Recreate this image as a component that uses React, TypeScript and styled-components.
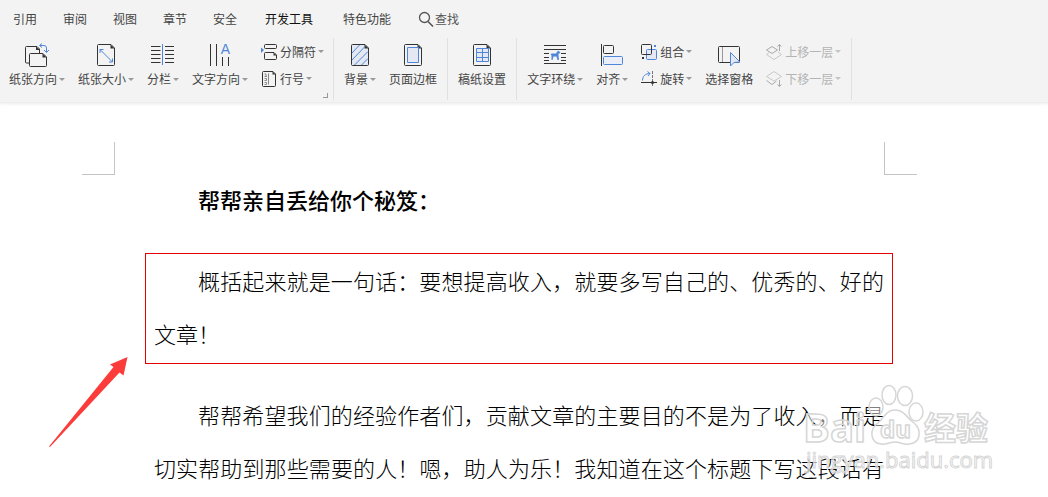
import React from "react";
import styled, { createGlobalStyle } from "styled-components";

const INK = "#333";
const BLUE = "#4f86d9";
const TINT = "#e3e8f3";

const GlobalStyle = createGlobalStyle`
  * { box-sizing: border-box; }
  body {
    margin: 0;
    background: #fff;
    font-family: "Noto Sans CJK SC", sans-serif;
    font-size: 12px;
    line-height: 16px;
    overflow: hidden;
  }
  button {
    font: inherit;
    color: inherit;
    border: 0;
    padding: 0;
    background: none;
    white-space: nowrap;
  }
  svg { display: block; flex: none; overflow: visible; }
`;

const Header = styled.header`
  background: #f3f3f3;
  color: #444;
  padding-bottom: 2px;
  border-bottom: 1px solid #ededed;
  box-shadow: 0 1px 3px rgba(0, 0, 0, 0.08);
`;

const TabBar = styled.nav`
  display: flex;
  align-items: center;
  height: 38px;
`;

const Tab = styled.button<{ $wide?: boolean; $strong?: boolean }>`
  padding: 0 ${(p) => (p.$wide ? 15 : 13)}px;
  color: ${(p) => (p.$strong ? "#111" : "#444")};
`;

const SearchButton = styled.button`
  display: flex;
  align-items: center;
  gap: 1px;
  padding: 0 12px;
  color: #555;
`;

const Ribbon = styled.div`
  display: flex;
  height: 62px;
`;

const Group = styled.div`
  position: relative;
  display: flex;
  gap: 13px;
  padding: 5px 10px 0;
  border-right: 1px solid #e0e0e0;
  &:first-child { padding: 5px 9px 0; }
`;

const BigButton = styled.button`
  display: flex;
  flex-direction: column;
  align-items: center;
  gap: 4px;
  height: 44px;
`;

const Label = styled.span`
  display: flex;
  align-items: center;
  gap: 2px;
`;

const Stack = styled.div`
  display: flex;
  flex-direction: column;
  align-items: flex-start;
  gap: 10px;
`;

const SmallButton = styled.button`
  display: flex;
  align-items: center;
  gap: 3px;
  height: 17px;
  &:disabled { color: #b4b4b4; }
`;

const CaretShape = styled.i`
  border: 3px solid transparent;
  border-top-color: #999;
  border-bottom: 0;
  button:disabled & { border-top-color: #c4c4c4; }
`;

const Launcher = styled.button`
  position: absolute;
  right: 5px;
  bottom: 2px;
  width: 5px;
  height: 5px;
  border: solid #999;
  border-width: 0 1px 1px 0;
`;

const Paper = styled.main`
  position: relative;
  padding: 39px 131px 0 82px;
`;

const Margins = styled.div`
  display: flex;
  justify-content: space-between;
`;

const Corner = styled.span<{ $side: "left" | "right" }>`
  width: 33px;
  height: 33px;
  border-bottom: 1px solid #c4c4c4;
  border-${(p) => (p.$side === "left" ? "right" : "left")}: 1px solid #c4c4c4;
`;

const Body = styled.article`
  margin: 0 33px 0 72px;
  color: #000;
  font-size: 22px;
  line-height: 53px;
`;

const Heading = styled.h1`
  margin: 0;
  font-size: 22px;
  line-height: 48px;
  font-weight: 500;
  text-indent: 2em;
`;

const Paragraph = styled.p<{ $runsOn?: boolean }>`
  margin: 0;
  font-weight: 300;
  text-indent: 2em;
  text-align: justify;
  text-align-last: ${(p) => (p.$runsOn ? "justify" : "auto")};
`;

const Callout = styled.section`
  position: relative;
  margin: 30px -9px 24px;
  padding: 0 8px 3px;
  border: 1px solid #e60000;
`;

const Arrow = styled.svg`
  position: absolute;
  left: -98px;
  top: 102px;
`;

const Watermark = styled.svg`
  position: absolute;
  right: 54px;
  top: 277px;
  pointer-events: none;
`;

const Caret = () => <CaretShape aria-hidden="true" />;

const Icon = ({ size, children }: { size: number; children: React.ReactNode }) => (
  <svg width={size} height={size} viewBox={`0 0 ${size} ${size}`} fill="none" stroke={INK} aria-hidden="true">
    {children}
  </svg>
);

const Sheet = ({ fill = "none" }: { fill?: string }) => (
  <>
    <path d="M4.500 1.500H17L20.500 5V21.500a1 1 0 0 1-1 1H4.500a1 1 0 0 1-1-1V2.500a1 1 0 0 1 1-1Z" fill={fill} />
    <path d="M16.500 1.500V5.500H20.500Z" fill={INK} stroke="none" />
  </>
);

const OrientationIcon = () => (
  <Icon size={24}>
    <path d="M4.500 20H1.500a1 1 0 0 1-1-1V4.500a1 1 0 0 1 1-1H12L14.500 6V10.500" />
    <path d="M11 3.500V7h4Z" fill={INK} stroke="none" />
    <path d="M5.500 10.500H18L21.500 14V22.500a1 1 0 0 1-1 1H5.500a1 1 0 0 1-1-1V11.500a1 1 0 0 1 1-1Z" fill="#f3f3f3" />
    <path d="M17.500 10.500V14.500H21.500Z" fill={INK} stroke="none" />
    <path d="M15 2.500h4a2.500 2.500 0 0 1 2.500 2.500V9M17 .5l-2.500 2L17 4.500M19 7l2.500 2.500L24 7" stroke={BLUE} />
  </Icon>
);

const SizeIcon = () => (
  <Icon size={24}>
    <Sheet />
    <path d="M6 6.500 18.500 19M6 10V6.500H9.500M15 19h3.500V15.500" stroke={BLUE} />
  </Icon>
);

const ColumnsIcon = () => (
  <Icon size={24}>
    <path d="M0 3.500H9.500M0 7.500H9.500M0 11.500H9.500M0 15.500H9.500M0 19.500H9.500M14 3.500H23M14 7.500H23M14 11.500H23M14 15.500H23M14 19.500H23" />
    <path d="M11.500 1V22" stroke={BLUE} />
  </Icon>
);

const DirectionIcon = () => (
  <Icon size={24}>
    <path d="M2.500 1V23M8.500 1V23M14.500 14V23M20.500 14V23" />
    <text x="17.500" y="11" textAnchor="middle" fontFamily="Liberation Sans, sans-serif" fontSize="14" fill={BLUE} stroke="none">A</text>
  </Icon>
);

const BreakIcon = () => (
  <Icon size={16}>
    <path d="M4.500 .5H14.500a1 1 0 0 1 1 1V3.500a1 1 0 0 1-1 1H4.500a1 1 0 0 1-1-1V1.500a1 1 0 0 1 1-1ZM4.500 8.500H13L15.500 11V14.500a1 1 0 0 1-1 1H4.500a1 1 0 0 1-1-1V9.500a1 1 0 0 1 1-1Z" />
    <path d="M12.500 8.500V11.500H15.500Z" fill={INK} stroke="none" />
    <path d="M0 3.500 3 6 0 9Z" fill={BLUE} stroke="none" />
  </Icon>
);

const LineNumberIcon = () => (
  <Icon size={16}>
    <path d="M2.500 .5H12L14.500 3V14.500a1 1 0 0 1-1 1H2.500a1 1 0 0 1-1-1V1.500a1 1 0 0 1 1-1Z" />
    <path d="M11.500 .5V3.500H14.500Z" fill={INK} stroke="none" />
    <path d="M7.500 2.500V13.500M3.500 3H5V5.500M3.500 5.500H6M3.500 7.500H5.500V9.500H3.500M3.500 11.500H5.500V13.500H3.500" stroke="#8a8a8a" />
  </Icon>
);

const BackgroundIcon = () => (
  <Icon size={24}>
    <Sheet fill={TINT} />
    <path d="M4 10 11.500 2M4 17 17 3.500M6.500 22 20 8.500M13.500 22 20 15.500" stroke={BLUE} />
  </Icon>
);

const BorderIcon = () => (
  <Icon size={24}>
    <Sheet />
    <path d="M6.500 4.500H17.500V19.500H6.500Z" fill={TINT} stroke={BLUE} />
  </Icon>
);

const GridPaperIcon = () => (
  <Icon size={24}>
    <Sheet />
    <path d="M6.500 5.500H18.500V18.500H6.500ZM6.500 9.500H18.500M6.500 14.500H18.500M12.500 5.500V9.500M12.500 14.500V18.500M12.500 9.500V14.500" fill={TINT} stroke={BLUE} />
  </Icon>
);

const WrapIcon = () => (
  <Icon size={24}>
    <path d="M1 2.500H23M1 6.500H23M1 10.500H6M1 14.500H6M18 10.500H23M18 14.500H23M1 17.500H6M18 17.500H23M1 20.500H23" />
    <path d="M7.500 11 9 10.500H13L15 7.500 16 8.500 17.500 9 16.500 10.500H15.500V13L16 17H14.500L13.500 13.500H10.500L9.500 17H8.500L8.500 12.500Z" fill={BLUE} stroke="none" />
  </Icon>
);

const AlignIcon = () => (
  <Icon size={24}>
    <path d="M1.500 1V23" />
    <rect x="3.500" y="2.500" width="10" height="8" rx="1" />
    <rect x="3.500" y="13.500" width="19" height="8" rx="1" stroke={BLUE} fill="#e9eef8" />
  </Icon>
);

const CombineIcon = () => (
  <Icon size={16}>
    <rect x="5.500" y="5.500" width="10" height="10" rx="1" stroke={BLUE} fill={TINT} />
    <rect x=".5" y=".5" width="10" height="10" rx="1" />
    <path d="M13 1H15V3H13Z" fill={BLUE} stroke="none" />
    <path d="M1 13H3V15H1Z" fill={INK} stroke="none" />
  </Icon>
);

const RotateIcon = () => (
  <Icon size={16}>
    <path d="M0 11.500H16" />
    <path d="M11.500 0V16" strokeDasharray="3 1" stroke="#777" />
    <circle cx="11.500" cy="11.500" r="1.500" fill={INK} stroke="none" />
    <path d="M1.500 9.500C1.500 5.500 4 2.500 9 2.500M6.500 .5 9 2.500 7 5" stroke={BLUE} />
  </Icon>
);

const PaneIcon = () => (
  <Icon size={24}>
    <rect x="1.500" y="3.500" width="21" height="16" rx="1" />
    <path d="M5.500 4V19" stroke="#999" />
    <path d="M13.500 9.500V23L17 19.500 23 19Z" fill={TINT} stroke={BLUE} />
  </Icon>
);

const RaiseIcon = () => (
  <Icon size={16}>
    <path d="M3 8.500.5 10.500 8 15.500 15.500 10.500 12 8" stroke="#c8c8c8" />
    <path d="M6 2.500.5 6 6 9.500 11.500 6Z" stroke="#aaa" />
    <path d="M13.500 7V.5M11.500 2.500l2-2 2 2" stroke="#aaa" />
  </Icon>
);

const LowerIcon = () => (
  <Icon size={16}>
    <path d="M.5 9.500 6 13.500 10.500 10" stroke="#aaa" />
    <path d="M8 .5.500 5.500 8 10 15.500 5.500Z" stroke="#c8c8c8" />
    <path d="M13.500 9V15.500M11.500 13.500l2 2 2-2" stroke="#aaa" />
  </Icon>
);

const SearchIcon = () => (
  <Icon size={16}>
    <circle cx="6.500" cy="6.500" r="5" stroke="#555" strokeWidth="1.300" />
    <path d="M10 10.500 15 15.500" stroke="#555" strokeWidth="1.600" />
  </Icon>
);

const Big = ({ icon, text, menu }: { icon: React.ReactNode; text: string; menu?: boolean }) => (
  <BigButton type="button">
    {icon}
    <Label>{text}{menu && <Caret />}</Label>
  </BigButton>
);

const Small = ({ icon, text, disabled }: { icon: React.ReactNode; text: string; disabled?: boolean }) => (
  <SmallButton type="button" disabled={disabled}>
    {icon}
    <Label>{text}<Caret /></Label>
  </SmallButton>
);

export default function App() {
  return (
    <>
      <GlobalStyle />
      <Header>
        <TabBar>
          {["引用", "审阅", "视图", "章节", "安全"].map((name) => (
            <Tab key={name} type="button">{name}</Tab>
          ))}
          <Tab type="button" $wide $strong>开发工具</Tab>
          <Tab type="button" $wide>特色功能</Tab>
          <SearchButton type="button"><SearchIcon />查找</SearchButton>
        </TabBar>
        <Ribbon>
          <Group>
            <Big icon={<OrientationIcon />} text="纸张方向" menu />
            <Big icon={<SizeIcon />} text="纸张大小" menu />
            <Big icon={<ColumnsIcon />} text="分栏" menu />
            <Big icon={<DirectionIcon />} text="文字方向" menu />
            <Stack>
              <Small icon={<BreakIcon />} text="分隔符" />
              <Small icon={<LineNumberIcon />} text="行号" />
            </Stack>
            <Launcher type="button" aria-label="页面设置" />
          </Group>
          <Group>
            <Big icon={<BackgroundIcon />} text="背景" menu />
            <Big icon={<BorderIcon />} text="页面边框" />
          </Group>
          <Group>
            <Big icon={<GridPaperIcon />} text="稿纸设置" />
          </Group>
          <Group>
            <Big icon={<WrapIcon />} text="文字环绕" menu />
            <Big icon={<AlignIcon />} text="对齐" menu />
            <Stack>
              <Small icon={<CombineIcon />} text="组合" />
              <Small icon={<RotateIcon />} text="旋转" />
            </Stack>
            <Big icon={<PaneIcon />} text="选择窗格" />
            <Stack>
              <Small icon={<RaiseIcon />} text="上移一层" disabled />
              <Small icon={<LowerIcon />} text="下移一层" disabled />
            </Stack>
          </Group>
        </Ribbon>
      </Header>
      <Paper>
        <Margins>
          <Corner $side="left" />
          <Corner $side="right" />
        </Margins>
        <Body>
          <Heading>帮帮亲自丢给你个秘笈：</Heading>
          <Callout>
            <Paragraph>概括起来就是一句话：要想提高收入，就要多写自己的、优秀的、好的文章！</Paragraph>
            <Arrow width="80" height="92" viewBox="0 0 80 92" aria-hidden="true">
              <path d="M79.500 1 62 8.500 65.500 11 1 90.500 2 91 71.500 16.500 75.500 19.500Z" fill="#fb3c3a" />
            </Arrow>
          </Callout>
          <Paragraph $runsOn>
            帮帮希望我们的经验作者们，贡献文章的主要目的不是为了收入，而是切实帮助到那些需要的人！嗯，助人为乐！我知道在这个标题下写这段话有
          </Paragraph>
        </Body>
        <Watermark width="190" height="94" viewBox="0 0 190 94" fill="#fff" fillOpacity=".5" stroke="#d6d6d6" strokeWidth="1.500">
          <ellipse cx="72" cy="27" rx="7" ry="9" />
          <ellipse cx="85" cy="15" rx="7" ry="9.500" />
          <ellipse cx="101" cy="16" rx="7.500" ry="9.500" />
          <ellipse cx="112" cy="32" rx="7" ry="9" />
          <path d="M91 30C82 30 80 38 74 43 65 49 66 63 77 64 83 65 86 62 91 62 97 62 99 65 105 64 117 63 118 50 110 43 103 38 100 30 91 30Z" />
          <g fontFamily="Open Sans, sans-serif" fontWeight="700">
            <text x="-1" y="62" fontSize="40">Bai</text>
            <text x="76" y="58" fontSize="24">du</text>
            <text x="120" y="60" fontSize="32" fontFamily="Noto Sans CJK SC, sans-serif">经验</text>
            <text x="2" y="88" fontSize="22" fontWeight="400" strokeWidth="1">jingyan.baidu.com</text>
          </g>
        </Watermark>
      </Paper>
    </>
  );
}
